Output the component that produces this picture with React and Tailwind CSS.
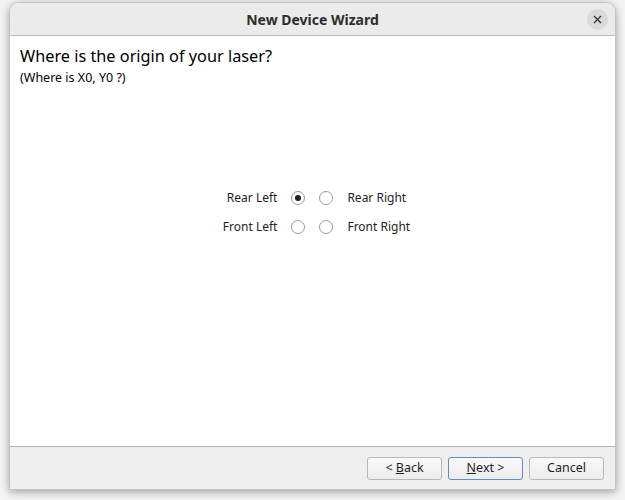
export default function App() {
  const rows = [
    { left: "Rear Left", right: "Rear Right", checked: 0 },
    { left: "Front Left", right: "Front Right", checked: -1 },
  ];

  return (
    <div
      className="w-[625px] h-[500px] bg-[#f4f4f4] pl-[9px] pr-[9px] pt-[2px] pb-[10px]"
      style={{ fontFamily: '"Noto Sans", "DejaVu Sans", sans-serif' }}
    >
      <div className="h-full flex flex-col rounded-t-[10px] overflow-hidden bg-white border border-[#c4c4c4] shadow-[0_2px_8px_rgba(0,0,0,0.35)]">
        {/* title bar */}
        <div className="h-[33px] shrink-0 flex items-center justify-center relative bg-[#ebebeb] border-b border-[#b9b9b9]">
          <span className="text-[14px] font-bold text-[#2e2e2e]">New Device Wizard</span>
          <button className="absolute right-[7px] top-[6px] w-[21px] h-[21px] rounded-full bg-[#dadada] flex items-center justify-center">
            <svg width="9" height="9" viewBox="0 0 9 9">
              <path d="M1 1L8 8M8 1L1 8" stroke="#333" strokeWidth="1.3" />
            </svg>
          </button>
        </div>

        {/* content */}
        <div className="flex-1 flex flex-col px-[10px] pt-[10px]">
          <div className="text-[16.3px] text-black leading-[20px]">Where is the origin of your laser?</div>
          <div className="text-[12.5px] text-black mt-[4px] leading-[16px]">(Where is X0, Y0 ?)</div>

          <div className="flex-1 flex items-start justify-center pl-[8px] pt-[103px]">
            <div className="grid grid-cols-[auto_auto_auto_auto] gap-x-[8px] gap-y-[11px] items-center text-[12px] text-[#1e1e1e]">
              {rows.map((r) => (
                <>
                  <span key={r.left} className="text-right pr-[6px]">{r.left}</span>
                  <span className="w-[14px] h-[14px] rounded-full border border-[#9a9a9a] bg-white flex items-center justify-center mr-[6px]">
                    {r.checked === 0 && <span className="w-[6px] h-[6px] rounded-full bg-[#222]" />}
                  </span>
                  <span className="w-[14px] h-[14px] rounded-full border border-[#9a9a9a] bg-white" />
                  <span className="pl-[6px]">{r.right}</span>
                </>
              ))}
            </div>
          </div>
        </div>

        {/* footer */}
        <div className="h-[43px] shrink-0 bg-[#efefef] border-t border-[#b5b5b5] flex items-center justify-end gap-[6px] pr-[11px] text-[12.5px] text-[#1e1e1e]">
          <button className="w-[75px] h-[23px] rounded-[3px] border border-[#b8b8b8] bg-gradient-to-b from-[#fafafa] to-[#ececec]">
            &lt; <span className="underline">B</span>ack
          </button>
          <button className="w-[75px] h-[23px] rounded-[3px] border border-[#5b8fc7] bg-gradient-to-b from-[#fafafa] to-[#ececec]">
            <span className="underline">N</span>ext &gt;
          </button>
          <button className="w-[75px] h-[23px] rounded-[3px] border border-[#b8b8b8] bg-gradient-to-b from-[#fafafa] to-[#ececec]">
            Cancel
          </button>
        </div>
      </div>
    </div>
  );
}
